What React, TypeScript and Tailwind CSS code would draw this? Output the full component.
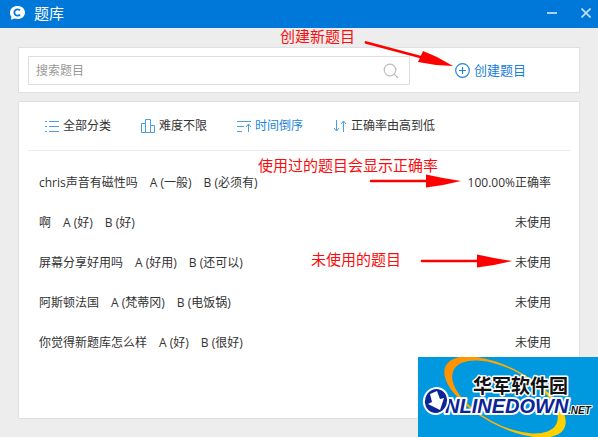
import type { ReactNode } from 'react';

type Question = {
  title: string;
  options: string[];
  status: string;
};

const questions: Question[] = [
  { title: 'chris声音有磁性吗', options: ['A (一般)', 'B (必须有)'], status: '100.00%正确率' },
  { title: '啊', options: ['A (好)', 'B (好)'], status: '未使用' },
  { title: '屏幕分享好用吗', options: ['A (好用)', 'B (还可以)'], status: '未使用' },
  { title: '阿斯顿法国', options: ['A (梵蒂冈)', 'B (电饭锅)'], status: '未使用' },
  { title: '你觉得新题库怎么样', options: ['A (好)', 'B (很好)'], status: '未使用' },
];

function ListIcon() {
  return (
    <svg width="14" height="12" viewBox="0 0 14 12" stroke="#4a9fe3" fill="none">
      <path d="M0 1.5h2M4 1.5h10M0 6.5h2M4 6.5h10M0 11.5h2M4 11.5h10" />
    </svg>
  );
}

function LevelIcon() {
  return (
    <svg width="14" height="14" viewBox="0 0 14 14" stroke="#4a9fe3" fill="none">
      <path d="M.5 4.5h4v9h-4zM4.5 .5h5v13h-5zM9.5 6.5h4v7h-4z" />
    </svg>
  );
}

function TimeIcon() {
  return (
    <svg width="14" height="12" viewBox="0 0 14 12" stroke="#4a9fe3" fill="none">
      <path d="M0 1.5h14M0 6.5h7M0 11.5h5M11.5 12V4M9 7l2.5-3L14 7" />
    </svg>
  );
}

function SortIcon() {
  return (
    <svg width="14" height="12" viewBox="0 0 14 12" stroke="#4a9fe3" fill="none">
      <path d="M3.5 0v11M1 8l2.5 3L6 8M10.5 12V1M8 4l2.5-3L13 4" />
    </svg>
  );
}

function Filter({ icon, label, active }: { icon: ReactNode; label: string; active?: boolean }) {
  return (
    <button
      type="button"
      className={`flex items-center gap-1 whitespace-nowrap ${active ? 'text-[#1a85dc]' : 'text-[#333]'}`}
    >
      {icon}
      {label}
    </button>
  );
}

function Note({ children, className }: { children: ReactNode; className: string }) {
  return (
    <p className={`absolute whitespace-nowrap text-[15px] leading-5 text-[#fb0d0d] ${className}`}>{children}</p>
  );
}

function Arrow({ className }: { className: string }) {
  return (
    <svg className={`absolute ${className}`} width="92" height="14" viewBox="0 0 92 14" fill="#f00">
      <path d="M2 7h60" stroke="#f00" strokeWidth="2.6" strokeLinecap="round" />
      <path d="M57 0.5L74 4l18 3-18 4-17 2.5z" />
    </svg>
  );
}

function SiteBadge() {
  return (
    <svg className="absolute right-0 bottom-0" width="180" height="80" viewBox="0 0 180 80">
      <defs>
        <linearGradient id="ring" x1="0" y1="0" x2="1" y2="0">
          <stop offset="0" stopColor="#ff9000" />
          <stop offset="1" stopColor="#ffd400" />
        </linearGradient>
      </defs>
      <rect width="180" height="80" fill="#0099df" />
      <path
        transform="translate(87 40) rotate(28)"
        fill="url(#ring)"
        fillRule="evenodd"
        d="M-67 0a67 29 0 1 0 134 0a67 29 0 1 0-134 0zM-58 0a58 27.5 0 1 0 116 0a58 27.5 0 1 0-116 0z"
      />
      <g strokeLinejoin="round" paintOrder="stroke" stroke="#fff">
        <text
          x="55"
          y="36"
          fontSize="19"
          fontWeight="700"
          strokeWidth="3"
          fill="#111"
          fontFamily="'Noto Sans CJK SC', sans-serif"
        >
          华军软件园
        </text>
        <text
          x="27"
          y="56"
          fontSize="20"
          fontWeight="700"
          fontStyle="italic"
          strokeWidth="4"
          fill="#0c2496"
          fontFamily="'Liberation Sans', sans-serif"
        >
          NLINEDOWN
        </text>
        <text
          x="150"
          y="57"
          fontSize="10"
          fontWeight="700"
          fontStyle="italic"
          strokeWidth="2"
          fill="#111"
          fontFamily="'Liberation Sans', sans-serif"
        >
          .NET
        </text>
      </g>
      <ellipse cx="18" cy="44" rx="12" ry="13" fill="#0c2496" stroke="#fff" strokeWidth="2" transform="rotate(20 18 44)" />
      <path d="M12 37l7-3 3 8 4-1-4 12-12-6 4-2z" fill="#fff" />
    </svg>
  );
}

export default function App() {
  return (
    <div className="relative flex min-h-screen flex-col bg-[#ededed] font-['Open_Sans','Noto_Sans_CJK_SC',sans-serif] text-xs text-[#333]">
      <header className="flex h-7 items-center bg-[#0078d9] pr-0.5 pb-0.5 pl-2 text-white">
        <svg width="18" height="16" viewBox="0 0 18 16">
          <path
            d="M9.5 1C13.8 1 17 3.7 17 7.5S13.8 14 9.5 14c-1 0-2-.1-2.8-.4L3 14.7l.4-3C2.3 10.5 2 9 2 7.5 2 3.7 5.2 1 9.5 1z"
            fill="#fff"
          />
          <path d="M12 5.4a3.2 3.2 0 1 0 0 4.2" fill="none" stroke="#0078d9" strokeWidth="1.8" />
        </svg>
        <h1 className="ml-2 text-[15px] leading-6">题库</h1>
        <button type="button" aria-label="最小化" className="ml-auto flex size-5 items-center justify-center">
          <svg width="10" height="2" viewBox="0 0 10 2">
            <path d="M0 1h10" stroke="#a9d2f5" strokeWidth="2" />
          </svg>
        </button>
        <button type="button" aria-label="关闭" className="ml-3.5 flex size-5 items-center justify-center">
          <svg width="10" height="10" viewBox="0 0 10 10">
            <path d="M.5 .5l9 9M9.5 .5l-9 9" stroke="#c5e1f8" strokeWidth="1.6" />
          </svg>
        </button>
      </header>

      <main className="flex grow flex-col gap-2 px-[18px] pt-[19px] pb-[18px]">
        <section className="flex items-center border border-[#e0e0e0] bg-white pt-2 pb-[7px] pl-[9px]">
          <label className="flex h-[29px] grow items-center border border-[#dedede] pr-2.5 pl-[7px]">
            <input
              type="text"
              aria-label="搜索题目"
              placeholder="搜索题目"
              className="min-w-0 grow outline-none placeholder:text-[#999]"
            />
            <svg width="16" height="16" viewBox="0 0 16 16" fill="none" stroke="#bdbdbd" strokeWidth="1.2">
              <circle cx="7" cy="7" r="5.8" />
              <path d="M11.2 11.2l3.8 3.8" />
            </svg>
          </label>
          <div className="flex w-[169px] shrink-0 pl-[45px]">
            <button type="button" className="flex items-center gap-1 text-[13px] text-[#1a80d8]">
              <svg width="15" height="15" viewBox="0 0 15 15" fill="none" stroke="#2487dc" strokeWidth="1.2">
                <circle cx="7.5" cy="7.5" r="6.8" />
                <path d="M7.5 4v7M4 7.5h7" />
              </svg>
              创建题目
            </button>
          </div>
        </section>

        <section className="grow border border-[#e0e0e0] bg-white">
          <div className="mx-[9px] flex h-[49px] items-center gap-[30px] border-b border-[#ebebeb] pl-[17px]">
            <Filter icon={<ListIcon />} label="全部分类" />
            <Filter icon={<LevelIcon />} label="难度不限" />
            <Filter icon={<TimeIcon />} label="时间倒序" active />
            <Filter icon={<SortIcon />} label="正确率由高到低" />
          </div>
          <ul className="pt-3 pr-7 pl-5">
            {questions.map((q) => (
              <li key={q.title} className="flex h-10 items-center gap-3">
                <span>{q.title}</span>
                {q.options.map((option) => (
                  <span key={option}>{option}</span>
                ))}
                <span className="ml-auto">{q.status}</span>
              </li>
            ))}
          </ul>
        </section>
      </main>

      <Note className="top-[26px] right-[243px]">创建新题目</Note>
      <svg className="absolute top-10 right-[144px]" width="90" height="28" viewBox="0 0 90 28">
        <path d="M2 2.5l60 16" stroke="#f00" strokeWidth="2.8" strokeLinecap="round" />
        <path d="M59 11l14 6 16 9-17-1-18-3z" fill="#f00" />
      </svg>
      <Note className="top-[155px] right-[160px]">使用过的题目会显示正确率</Note>
      <Arrow className="top-[174px] right-[137px]" />
      <Note className="top-[249px] right-[197px]">未使用的题目</Note>
      <Arrow className="top-[254px] right-[86px]" />

      <SiteBadge />
    </div>
  );
}
